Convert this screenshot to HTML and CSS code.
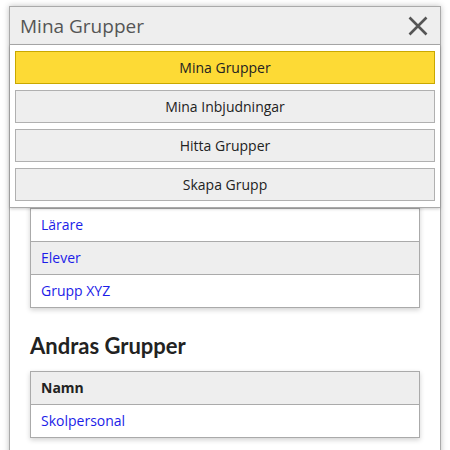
FILE: index.html
```html
<!DOCTYPE html>
<html>
<head>
    <title>Mina Grupper</title>
    <link rel="stylesheet" href="styles.css">
</head>
<body>
<div class="panel">
    <div class="panel-header">
        <span class="panel-title">Mina Grupper</span>
        <svg class="close" width="20" height="20" viewBox="0 0 20 20">
            <path d="M1.5 1.5 L18.5 18.5 M18.5 1.5 L1.5 18.5" stroke="#555" stroke-width="2.6" fill="none"/>
        </svg>
    </div>

    <div class="menu">
        <button class="menu-btn active">Mina Grupper</button>
        <button class="menu-btn">Mina Inbjudningar</button>
        <button class="menu-btn">Hitta Grupper</button>
        <button class="menu-btn">Skapa Grupp</button>
    </div>

    <div class="content">
        <h2>Mina Grupper</h2>
        <div class="table">
            <div class="row head">Namn</div>
            <div class="row"><a href="#">Lärare</a></div>
            <div class="row alt"><a href="#">Elever</a></div>
            <div class="row"><a href="#">Grupp XYZ</a></div>
        </div>

        <h2>Andras Grupper</h2>
        <div class="table">
            <div class="row head">Namn</div>
            <div class="row"><a href="#">Skolpersonal</a></div>
        </div>
    </div>
</div>
</body>
</html>
```

FILE: styles.css
```css
body {
    margin: 0;
    font-family: "Open Sans", sans-serif;
    background: #fff;
}
.panel {
    position: relative;
    margin: 6px 9px 0;
    width: 430px;
    border: 1px solid #aaa;
    background: #fff;
    box-shadow: 0 0 6px rgba(0, 0, 0, 0.25);
}
.panel-header {
    display: flex;
    align-items: center;
    justify-content: space-between;
    height: 37px;
    padding: 0 12px 0 10px;
    background: #eee;
    border-bottom: 1px solid #aaa;
}
.panel-title {
    font-size: 19px;
    color: #555;
}
.close {
    display: block;
}
.menu {
    position: absolute;
    top: 38px;
    left: 0;
    right: 0;
    z-index: 2;
    display: flex;
    flex-direction: column;
    gap: 6px;
    padding: 6px 5px;
    background: #fff;
    border-bottom: 1px solid #aaa;
    box-shadow: 0 1px 3px rgba(0, 0, 0, 0.2);
}
.menu-btn {
    height: 33px;
    margin: 0;
    padding: 0;
    font-family: "Open Sans", sans-serif;
    font-size: 14px;
    color: #222;
    background: #eee;
    border: 1px solid #b0b0b0;
}
.menu-btn.active {
    background: #fdda35;
    border-color: #c9a800;
}
.content {
    padding: 67px 20px 20px;
}
h2 {
    margin: 25px 0 12px;
    font-family: Lato, sans-serif;
    font-size: 22px;
    line-height: 26px;
    font-weight: bold;
    color: #222;
}
.table {
    border: 1px solid #aaa;
    box-shadow: 0 2px 5px rgba(0, 0, 0, 0.18);
}
.row {
    height: 32px;
    line-height: 32px;
    padding: 0 10px;
    font-size: 14px;
    border-top: 1px solid #aaa;
}
.row:first-child {
    border-top: none;
}
.row.head {
    font-weight: bold;
    color: #222;
    background: #eee;
}
.row.alt {
    background: #eee;
}
.row a {
    color: #1c1ce8;
    text-decoration: none;
}
```
